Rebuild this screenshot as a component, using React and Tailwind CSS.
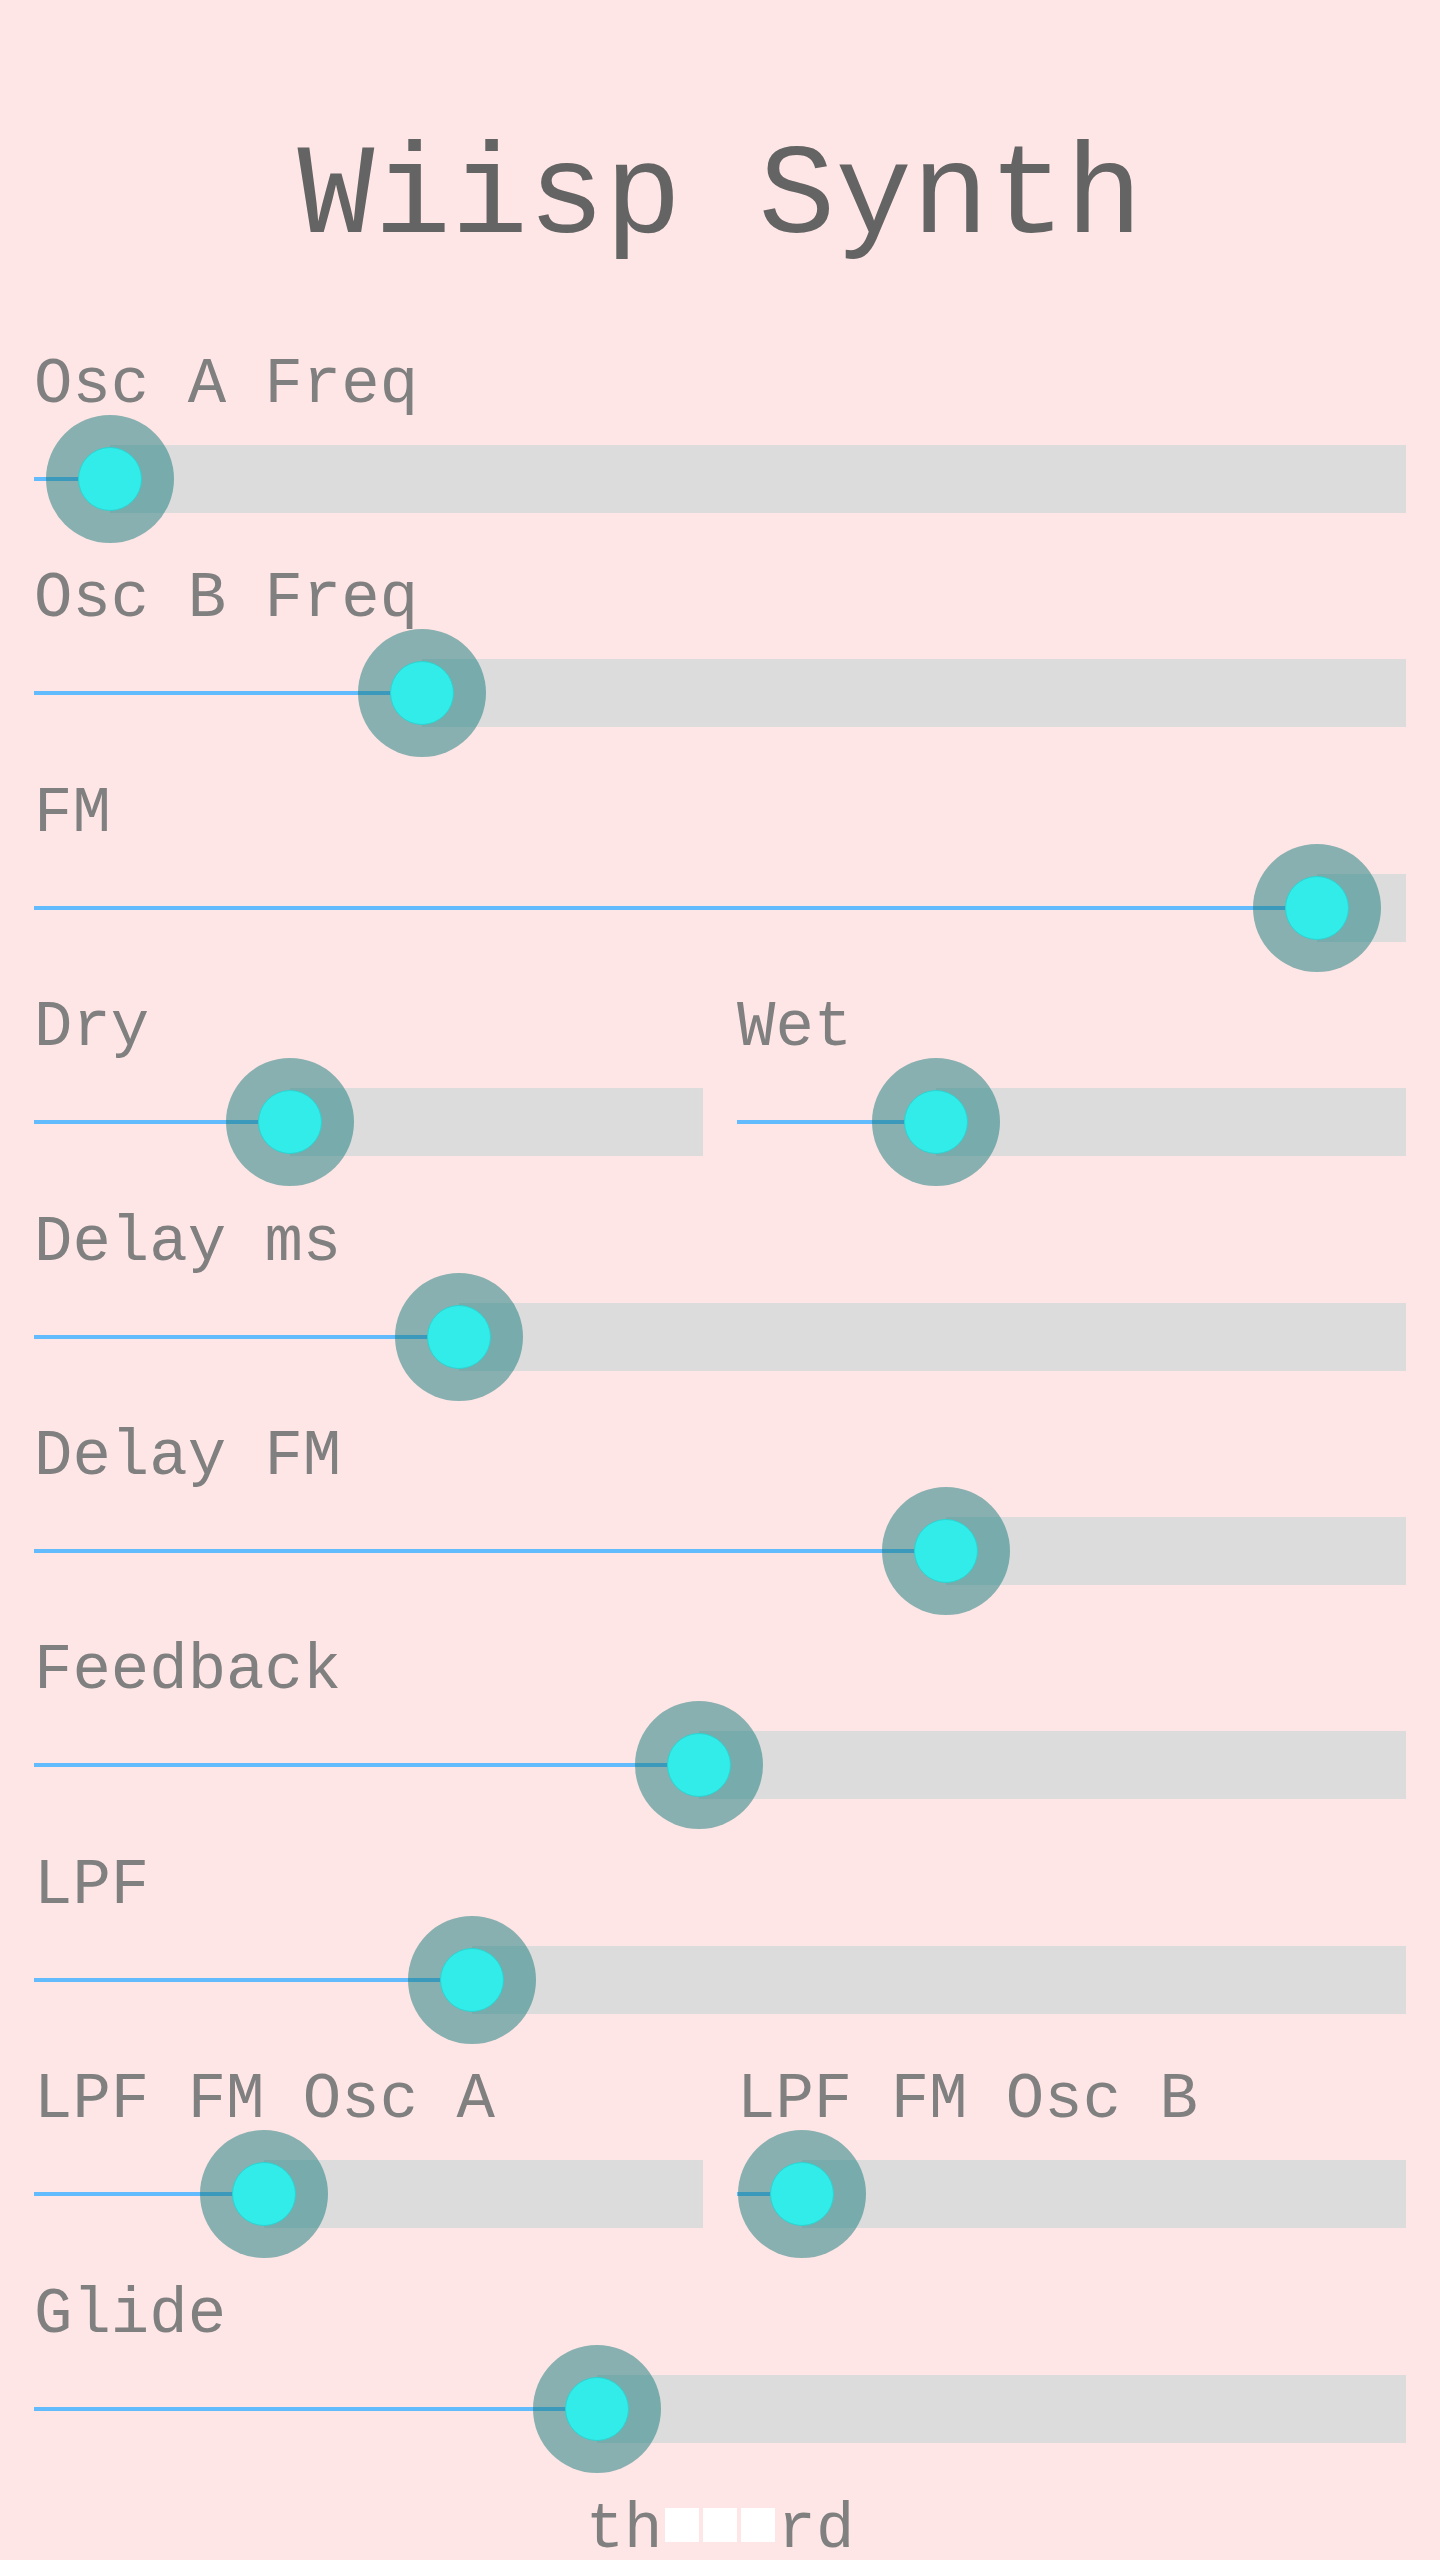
import React from "react";

const mono = { fontFamily: '"Liberation Mono", "DejaVu Sans Mono", monospace' };

function Slider({ label, pct }) {
  return (
    <div className="flex flex-col">
      <div className="text-[64px] leading-[64px] text-[#808080] whitespace-pre">{label}</div>
      <div className="relative h-[124px] flex items-center">
        <div className="h-[4px] bg-[#62bbfc]" style={{ width: `${pct}%` }} />
        <div className="h-[68px] flex-1 bg-[#dcdcdc]" />
        <div
          className="absolute top-1/2 w-[128px] h-[128px] -translate-x-1/2 -translate-y-1/2 rounded-full bg-[rgba(20,122,122,0.5)] flex items-center justify-center"
          style={{ left: `${pct}%` }}
        >
          <div className="w-[64px] h-[64px] rounded-full bg-[#31ece9] border border-[#2bd4d2]" />
        </div>
      </div>
    </div>
  );
}

export default function App() {
  return (
    <div className="min-h-[2560px] w-full bg-[#ffe6e6]" style={mono}>
      <h1 className="pt-[134px] text-center text-[128px] leading-[128px] text-[#646464] font-normal whitespace-pre">
        Wiisp Synth
      </h1>
      <div className="mt-[91px] px-[34px] flex flex-col gap-[26.4px]">
        <Slider label="Osc A Freq" pct={5.54} />
        <Slider label="Osc B Freq" pct={28.3} />
        <Slider label="FM" pct={93.5} />
        <div className="grid grid-cols-2 gap-x-[34px]">
          <Slider label="Dry" pct={38.2} />
          <Slider label="Wet" pct={29.7} />
        </div>
        <Slider label="Delay ms" pct={31.0} />
        <Slider label="Delay FM" pct={66.5} />
        <Slider label="Feedback" pct={48.5} />
        <Slider label="LPF" pct={31.9} />
        <div className="grid grid-cols-2 gap-x-[34px]">
          <Slider label="LPF FM Osc A" pct={34.4} />
          <Slider label="LPF FM Osc B" pct={9.7} />
        </div>
        <Slider label="Glide" pct={41.0} />
      </div>
      <div className="mt-[31px] text-center text-[64px] leading-[56px] text-[#808080] whitespace-pre">
        th
        <span className="inline-block w-[34px] h-[34px] bg-white mx-[2.2px] align-[5px]" />
        <span className="inline-block w-[34px] h-[34px] bg-white mx-[2.2px] align-[5px]" />
        <span className="inline-block w-[34px] h-[34px] bg-white mx-[2.2px] align-[5px]" />
        rd
      </div>
    </div>
  );
}
